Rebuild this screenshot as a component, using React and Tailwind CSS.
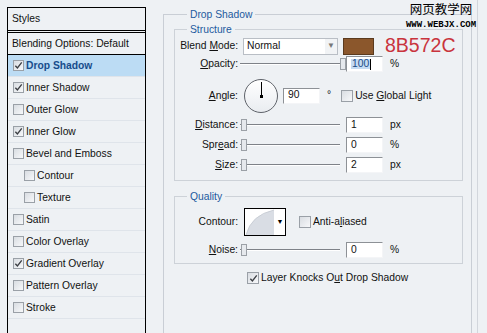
import React from "react";

const UI = { fontFamily: '"Liberation Sans", Arial, sans-serif' };

function Check({ checked, size = "w-[11px] h-[11px]" }) {
  return (
    <span
      className={`${size} shrink-0 border border-[#9aa0a7] bg-gradient-to-br from-[#d9dde2] to-[#f7f8fa] flex items-center justify-center`}
    >
      {checked && (
        <svg viewBox="0 0 10 10" className="w-[9px] h-[9px]">
          <path d="M1.5 5.2 L3.8 7.8 L8.6 1.6" fill="none" stroke="#3c3f44" strokeWidth="1.5" />
        </svg>
      )}
    </span>
  );
}

function StyleRow({ label, checked, indent, active }) {
  return (
    <div
      className={`h-[22px] flex items-center gap-[2px] border-b border-[#dfe4ea] ${indent ? "pl-[16px]" : "pl-[5px]"} ${active ? "bg-[#bcdcf4]" : ""}`}
    >
      <Check checked={checked} />
      <span className={active ? "font-bold text-[#174d8c]" : "text-[#111]"}>{label}</span>
    </div>
  );
}

function Label({ children }) {
  return <span className="w-[63px] shrink-0 text-right text-[#111]">{children}</span>;
}

function NumBox({ value, selected }) {
  return (
    <div className="w-[37px] h-[16px] shrink-0 bg-white border border-t-[#8d9196] border-l-[#8d9196] border-r-[#f4f5f7] border-b-[#f4f5f7] flex items-center pl-[4px] leading-none">
      {selected ? (
        <>
          <span className="bg-[#c4dbf3] text-[#1b4b86] px-[1px]">{value}</span>
          <span className="w-[1px] h-[11px] bg-black" />
        </>
      ) : (
        <span className="text-[#111]">{value}</span>
      )}
    </div>
  );
}

function Slider({ at = "start" }) {
  return (
    <div className="relative w-[106px] h-[16px] ml-[2px] shrink-0 flex items-center">
      <div className="w-[100px] h-[2px] border-t border-[#7e8288] border-b border-b-white" />
      <span
        className={`absolute top-[2px] w-[6px] h-[12px] border border-[#9ba0a6] bg-[#e6e9ed] ${at === "end" ? "left-[100px]" : "left-[1px]"}`}
      />
    </div>
  );
}

function SliderRow({ label, value, unit, at, selected, mt }) {
  return (
    <div className={`h-[16px] flex items-center ${mt}`}>
      <Label>{label}</Label>
      <Slider at={at} />
      <NumBox value={value} selected={selected} />
      <span className="ml-[7px] text-[#111]">{unit}</span>
    </div>
  );
}

export default function App() {
  const styles = [
    ["Drop Shadow", true, false, true],
    ["Inner Shadow", true],
    ["Outer Glow", false],
    ["Inner Glow", true],
    ["Bevel and Emboss", false],
    ["Contour", false, true],
    ["Texture", false, true],
    ["Satin", false],
    ["Color Overlay", false],
    ["Gradient Overlay", true],
    ["Pattern Overlay", false],
    ["Stroke", false],
  ];

  return (
    <div
      className="relative w-[487px] h-[333px] overflow-hidden bg-[#eef1f4] flex text-[10.3px]"
      style={UI}
    >
      {/* Styles list */}
      <div className="w-[163px] shrink-0 pl-[7px] pt-[7px]">
        <div className="w-[139px] h-[340px] border border-black bg-[#eef1f4]">
          <div className="h-[23px] flex items-center pl-[4px] border-b border-black text-[#111]">Styles</div>
          <div className="h-[23px] mt-[1px] flex items-center pl-[4px] border-t border-b border-black text-[#111]">
            Blending Options: Default
          </div>
          {styles.map(([l, c, i, a]) => (
            <StyleRow key={l} label={l} checked={c} indent={i} active={a} />
          ))}
        </div>
      </div>

      {/* Drop Shadow panel */}
      <fieldset className="mt-[8px] w-[309px] h-[340px] shrink-0 border border-[#c9ced5] pl-[10px] pr-[8px]">
        <legend className="ml-[13px] px-[3px] text-[#1d5a9e] leading-[13px]">Drop Shadow</legend>

        <fieldset className="mt-[2px] border border-[#cdd2d8] pb-[7px]">
          <legend className="ml-[12px] px-[3px] text-[#1d5a9e] leading-[13px]">Structure</legend>

          <div className="mt-[1px] h-[18px] flex items-center">
            <Label>
              Blend <u>M</u>ode:
            </Label>
            <div className="ml-[5px] w-[95px] h-[17px] shrink-0 bg-white border border-[#b9bec5] flex items-center">
              <span className="flex-1 pl-[3px] text-[#111]">Normal</span>
              <span className="w-[12px] h-full flex items-center justify-center bg-[#f1f3f5] text-[#777] text-[8px]">▼</span>
            </div>
            <span className="ml-[5px] w-[31px] h-[17px] shrink-0 bg-[#8B572C] border border-[#5a3a1e]" />
            <span className="ml-[11px] text-[19.5px] leading-none text-[#c9343d] whitespace-nowrap">8B572C</span>
          </div>

          <SliderRow label={<><u>O</u>pacity:</>} value="100" unit="%" at="end" selected mt="mt-[1px]" />

          <div className="mt-[6px] h-[35px] flex items-center">
            <Label>
              <u>A</u>ngle:
            </Label>
            <div className="relative ml-[6px] w-[34px] h-[34px] shrink-0 rounded-full border border-[#5f636a] bg-gradient-to-b from-white to-[#e9ecf0]">
              <span className="absolute left-[16px] top-[2px] w-[1px] h-[15px] bg-black" />
              <span className="absolute left-[15px] top-[15px] w-[3px] h-[3px] bg-black" />
            </div>
            <div className="ml-[5px]">
              <NumBox value="90" />
            </div>
            <span className="ml-[7px] text-[#111] self-start mt-[9px]">°</span>
            <div className="ml-[10px] flex items-center gap-[2px]">
              <Check size="w-[12px] h-[12px]" />
              <span className="text-[#111]">
                Use <u>G</u>lobal Light
              </span>
            </div>
          </div>

          <SliderRow label={<><u>D</u>istance:</>} value="1" unit="px" mt="mt-[4px]" />
          <SliderRow label={<>Spr<u>e</u>ad:</>} value="0" unit="%" mt="mt-[4px]" />
          <SliderRow label={<><u>S</u>ize:</>} value="2" unit="px" mt="mt-[4px]" />
        </fieldset>

        <fieldset className="mt-[9px] border border-[#cdd2d8] pb-[5px]">
          <legend className="ml-[12px] px-[3px] text-[#1d5a9e] leading-[13px]">Quality</legend>

          <div className="mt-[5px] h-[28px] flex items-center">
            <Label>Contour:</Label>
            <div className="ml-[6px] w-[42px] h-[28px] shrink-0 border border-black bg-white flex">
              <svg viewBox="0 0 30 26" className="w-[30px] h-[26px]">
                <path d="M1 26 Q6 6 29 1 L29 26 Z" fill="#d9dde4" />
                <path d="M1 26 Q6 6 29 1" fill="none" stroke="#c4c9d1" strokeWidth="0.8" />
              </svg>
              <span className="flex-1 flex items-center justify-center text-[7px] text-black">▼</span>
            </div>
            <div className="ml-[13px] flex items-center gap-[2px]">
              <Check size="w-[12px] h-[12px]" />
              <span className="text-[#111]">
                Anti-a<u>l</u>iased
              </span>
            </div>
          </div>

          <SliderRow label={<><u>N</u>oise:</>} value="0" unit="%" mt="mt-[6px]" />
        </fieldset>

        <div className="mt-[7px] h-[14px] ml-[73px] flex items-center gap-[2px]">
          <Check checked size="w-[12px] h-[12px]" />
          <span className="text-[#111]">
            Layer Knocks O<u>u</u>t Drop Shadow
          </span>
        </div>
      </fieldset>

      <div className="ml-[5px] w-[1px] h-full bg-[#d2d6dc]" />

      {/* watermark */}
      <div className="absolute top-[3px] left-[404px] w-[74px] flex flex-col items-center leading-none whitespace-nowrap">
        <span className="text-[12.5px] text-black" style={{ fontFamily: '"Noto Sans CJK SC", sans-serif' }}>
          网页教学网
        </span>
        <span
          className="mt-[5px] text-[9px] font-bold text-black"
          style={{ fontFamily: '"Liberation Mono", monospace' }}
        >
          WWW.WEBJX.COM
        </span>
      </div>
    </div>
  );
}
